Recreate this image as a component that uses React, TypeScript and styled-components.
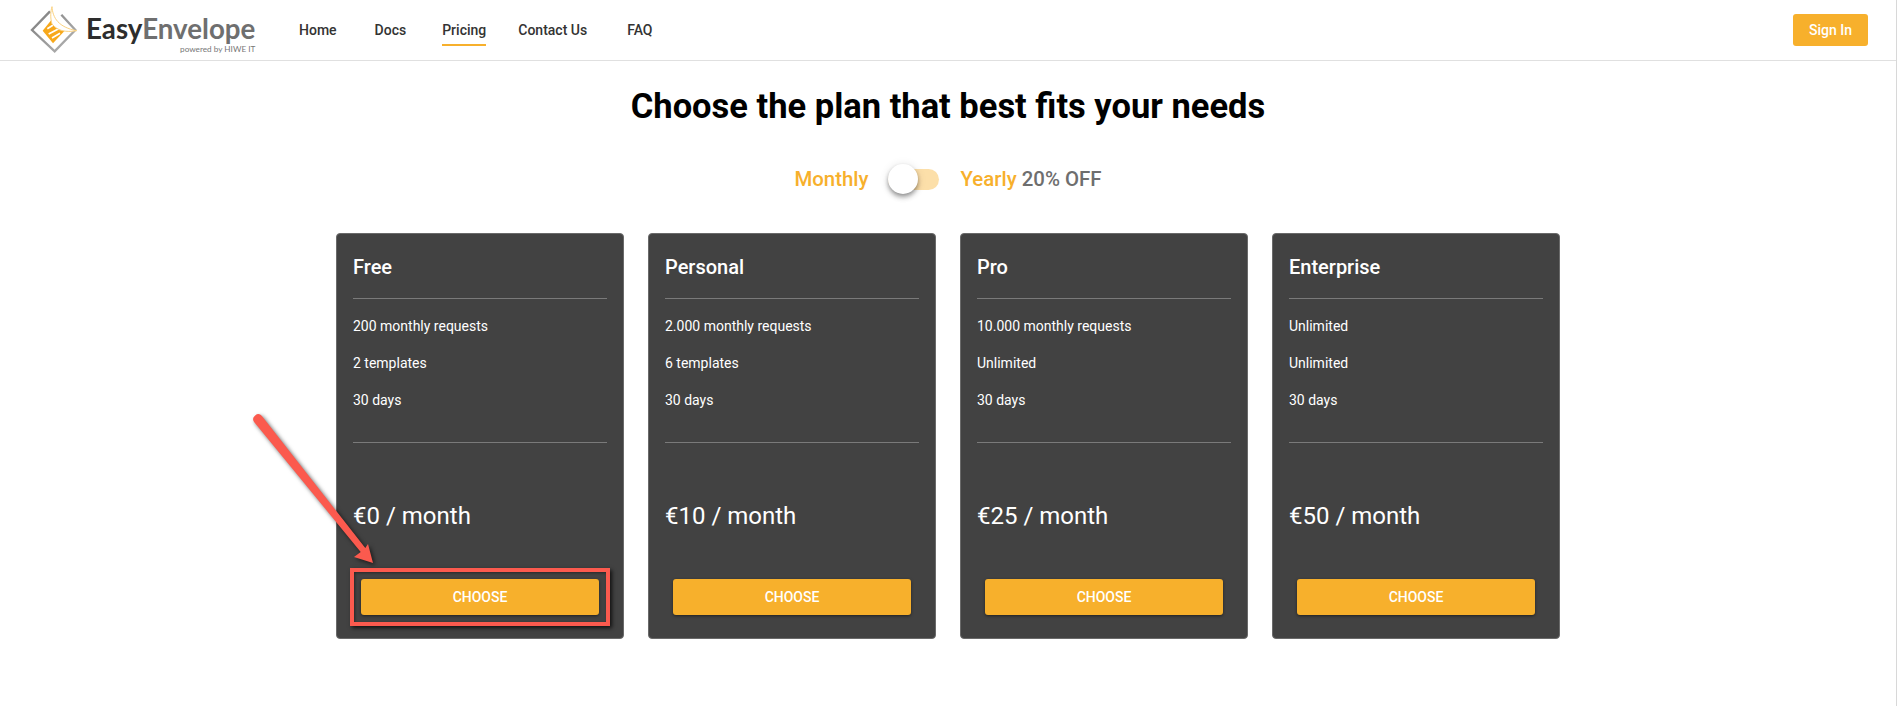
import React from "react";
import styled, { createGlobalStyle } from "styled-components";

const Global = createGlobalStyle`
  html, body { margin: 0; padding: 0; background: #fff; }
  body { font-family: Roboto, "Liberation Sans", sans-serif; overflow: hidden; }
  * { box-sizing: border-box; }
`;

const Page = styled.div`
  position: relative;
  width: 1897px;
  height: 706px;
  border-right: 1px solid #d8d8d8;
  background: #fff;
  overflow: hidden;
`;

const Header = styled.header`
  display: flex;
  align-items: center;
  height: 61px;
  padding: 0 28px 0 28px;
  border-bottom: 1px solid #e0e0e0;
`;

const LogoLink = styled.div`
  display: flex;
  align-items: center;
  width: 271px;
  gap: 2px;
`;

const LogoText = styled.div`
  display: flex;
  flex-direction: column;
  align-items: flex-end;
  padding-top: 8px;
`;

const Wordmark = styled.div`
  font-family: Lato, sans-serif;
  font-size: 27.7px;
  line-height: 30px;
  font-weight: 700;
  color: #6f6f6f;
  white-space: nowrap;
`;

const WordmarkDark = styled.span`
  color: #2d2d2d;
`;

const Powered = styled.div`
  font-family: Lato, sans-serif;
  font-size: 8.2px;
  line-height: 10px;
  color: #777;
  white-space: nowrap;
`;

const Nav = styled.nav`
  display: flex;
  align-items: center;
  height: 100%;
  flex: 1;
`;

const NavItem = styled.a<{ $left: number; $active?: boolean }>`
  display: flex;
  align-items: center;
  height: 34px;
  margin: -3px 0 0 ${(p) => p.$left}px;
  padding-top: 4px;
  font-size: 14px;
  font-weight: 500;
  color: #333;
  border-bottom: 2px solid ${(p) => (p.$active ? "#f7b02c" : "transparent")};
`;

const SignIn = styled.button`
  width: 75px;
  height: 32px;
  border: none;
  border-radius: 3px;
  background: #f7b02c;
  color: #fff;
  font-family: Roboto, sans-serif;
  font-size: 14px;
  font-weight: 500;
  margin-top: -1px;
`;

const Title = styled.h1`
  margin: 23px 0 0;
  font-size: 34.5px;
  line-height: 44px;
  font-weight: 700;
  color: #000;
  text-align: center;
`;

const Toggle = styled.div`
  display: flex;
  align-items: center;
  justify-content: center;
  height: 30px;
  margin-top: 36px;
  font-size: 20.4px;
  font-weight: 500;
`;

const ToggleLabel = styled.span`
  color: #f7b02c;
`;

const Off = styled.span`
  color: #6e6e6e;
`;

const SwitchTrack = styled.div`
  position: relative;
  width: 51px;
  height: 21px;
  margin: 0 22px 0 19px;
  border-radius: 11px;
  background: #fcdfa9;
`;

const SwitchThumb = styled.div`
  position: absolute;
  left: 0;
  top: -5px;
  width: 30px;
  height: 30px;
  border-radius: 50%;
  background: #fff;
  box-shadow: 0 2px 4px -1px rgba(0,0,0,.3), 0 4px 5px 0 rgba(0,0,0,.2), 0 1px 10px 0 rgba(0,0,0,.12);
`;

const Cards = styled.div`
  display: flex;
  justify-content: center;
  gap: 24px;
  margin-top: 39px;
`;

const Card = styled.section`
  display: flex;
  flex-direction: column;
  width: 288px;
  height: 406px;
  padding: 0 16px;
  border: 1px solid #6a6a6a;
  border-radius: 4px;
  background: #424242;
  color: #fff;
`;

const CardTitle = styled.h2`
  margin: 0;
  height: 65px;
  padding-top: 2px;
  display: flex;
  align-items: center;
  font-size: 20px;
  font-weight: 500;
  border-bottom: 1px solid #7a7a7a;
`;

const Features = styled.ul`
  list-style: none;
  margin: 0;
  padding: 8px 0 0;
  height: 144px;
  border-bottom: 1px solid #7a7a7a;
`;

const Feature = styled.li`
  height: 37px;
  display: flex;
  align-items: center;
  font-size: 14px;
`;

const Price = styled.div`
  height: 136px;
  padding-top: 57px;
  font-size: 24px;
  line-height: 32px;
`;

const ChooseRow = styled.div`
  display: flex;
  justify-content: center;
`;

const Choose = styled.button`
  width: 238px;
  height: 36px;
  border: none;
  border-radius: 3px;
  background: #f7b02c;
  color: #fff;
  font-family: Roboto, sans-serif;
  font-size: 14px;
  font-weight: 500;
  box-shadow: 0 1px 3px rgba(0,0,0,.5);
`;

const Highlight = styled.div`
  position: absolute;
  left: 350px;
  top: 568px;
  width: 260px;
  height: 58px;
  border: 4px solid #fb5a4e;
  box-shadow: 2px 2px 4px rgba(0,0,0,.75), inset 1px 1px 3px rgba(0,0,0,.4);
`;

const ArrowSvg = styled.svg`
  position: absolute;
  left: 245px;
  top: 405px;
  filter: drop-shadow(2px 2px 2px rgba(0,0,0,.6));
`;

const Logo = () => (
  <svg width="56" height="52" viewBox="0 0 168 156">
    <defs>
      <linearGradient id="dia" x1="0" y1="0" x2="1" y2="1">
        <stop offset="0" stopColor="#7d7d7d" />
        <stop offset="1" stopColor="#b5b5b5" />
      </linearGradient>
    </defs>
    <path d="M66 22 L12 78 L80 142 L142 78 L100 32" fill="none" stroke="url(#dia)" strokeWidth="7" />
    <path d="M75 42 L110 80 L75 118 L44 80 Z" fill="#f7a81b" />
    <path d="M58 74 L84 58 M62 90 L92 74 M72 102 L96 88" stroke="#fff" strokeWidth="5" />
    <path d="M72 8 C74 42 92 70 146 80 C112 86 88 80 72 60 C66 40 68 22 72 8 Z" fill="#fff" stroke="#fbd27f" strokeWidth="3" />
  </svg>
);

const plans = [
  { name: "Free", f: ["200 monthly requests", "2 templates", "30 days"], price: "€0 / month" },
  { name: "Personal", f: ["2.000 monthly requests", "6 templates", "30 days"], price: "€10 / month" },
  { name: "Pro", f: ["10.000 monthly requests", "Unlimited", "30 days"], price: "€25 / month" },
  { name: "Enterprise", f: ["Unlimited", "Unlimited", "30 days"], price: "€50 / month" },
];

export default function App() {
  return (
    <Page>
      <Global />
      <Header>
        <LogoLink>
          <Logo />
          <LogoText>
            <Wordmark><WordmarkDark>Easy</WordmarkDark>Envelope</Wordmark>
            <Powered>powered by HIWE IT</Powered>
          </LogoText>
        </LogoLink>
        <Nav>
          <NavItem $left={0}>Home</NavItem>
          <NavItem $left={38}>Docs</NavItem>
          <NavItem $left={36} $active>Pricing</NavItem>
          <NavItem $left={32}>Contact Us</NavItem>
          <NavItem $left={40}>FAQ</NavItem>
        </Nav>
        <SignIn>Sign In</SignIn>
      </Header>
      <Title>Choose the plan that best fits your needs</Title>
      <Toggle>
        <ToggleLabel>Monthly</ToggleLabel>
        <SwitchTrack><SwitchThumb /></SwitchTrack>
        <ToggleLabel>Yearly</ToggleLabel>&nbsp;<Off>20% OFF</Off>
      </Toggle>
      <Cards>
        {plans.map((p) => (
          <Card key={p.name}>
            <CardTitle>{p.name}</CardTitle>
            <Features>{p.f.map((t, i) => <Feature key={i}>{t}</Feature>)}</Features>
            <Price>{p.price}</Price>
            <ChooseRow><Choose>CHOOSE</Choose></ChooseRow>
          </Card>
        ))}
      </Cards>
      <ArrowSvg width="140" height="170" viewBox="0 0 140 170">
        <path d="M16.9 10.9 L120.3 143.1 L123 139 L128 158 L109 152 L115.7 146.9 L9.1 17.1 A5 5 0 0 1 16.9 10.9 Z" fill="#fb5a4e" />
      </ArrowSvg>
      <Highlight />
    </Page>
  );
}
